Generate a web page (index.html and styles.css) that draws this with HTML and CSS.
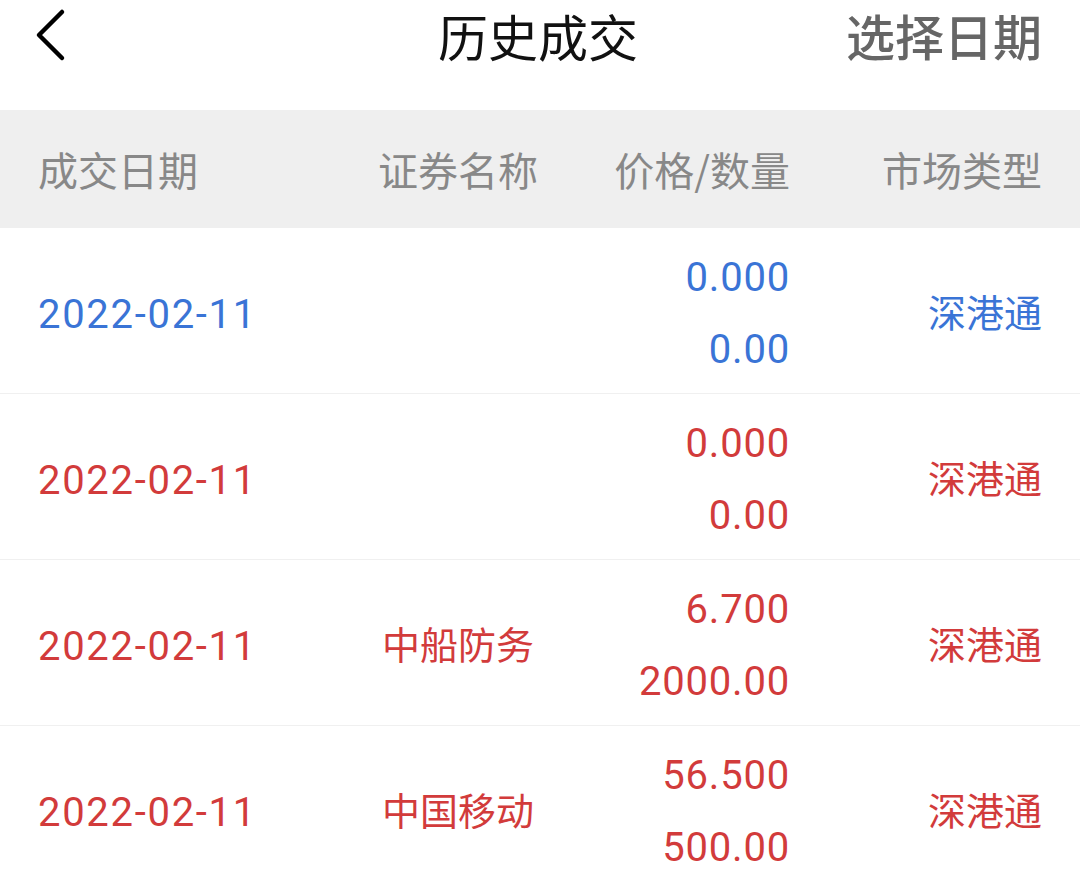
FILE: index.html
```html
<!DOCTYPE html>
<html lang="zh-CN">
<head>
    <meta charset="UTF-8">
    <meta name="viewport" content="width=device-width, initial-scale=1.0">
    <title>历史成交</title>
    <link rel="stylesheet" href="styles.css">
</head>
<body>
    <div class="topbar">
        <span class="back">
            <svg width="34" height="54" viewBox="0 0 34 54">
                <path d="M28 4 L5 27 L28 50" fill="none" stroke="#000" stroke-width="4.5" stroke-linecap="round" stroke-linejoin="round"/>
            </svg>
        </span>
        <span class="title">历史成交</span>
        <span class="pick-date">选择日期</span>
    </div>

    <div class="table-head grid">
        <span class="c1">成交日期</span>
        <span class="c2">证券名称</span>
        <span class="c3">价格/数量</span>
        <span class="c4">市场类型</span>
    </div>

    <!-- trade rows: blue = sell, red = buy -->
    <div class="row grid sell">
        <span class="c1 date">2022-02-11</span>
        <span class="c2"></span>
        <span class="c3 num">0.000<br>0.00</span>
        <span class="c4">深港通</span>
    </div>
    <div class="row grid buy">
        <span class="c1 date">2022-02-11</span>
        <span class="c2"></span>
        <span class="c3 num">0.000<br>0.00</span>
        <span class="c4">深港通</span>
    </div>
    <div class="row grid buy">
        <span class="c1 date">2022-02-11</span>
        <span class="c2">中船防务</span>
        <span class="c3 num">6.700<br>2000.00</span>
        <span class="c4">深港通</span>
    </div>
    <div class="row grid buy">
        <span class="c1 date">2022-02-11</span>
        <span class="c2">中国移动</span>
        <span class="c3 num">56.500<br>500.00</span>
        <span class="c4">深港通</span>
    </div>
</body>
</html>
```

FILE: styles.css
```css
body {
    margin: 0;
    font-family: Roboto, "Noto Sans CJK SC", sans-serif;
    background-color: #fff;
    height: 876px;
    overflow: hidden;
}
.topbar {
    height: 110px;
    display: flex;
    align-items: flex-start;
    justify-content: space-between;
    padding: 0 38px 0 34px;
}
.back {
    width: 200px;
    height: 70px;
    display: flex;
    align-items: center;
}
.title {
    font-family: "Noto Sans CJK SC", sans-serif;
    font-size: 50px;
    line-height: 70px;
    color: #111;
}
.pick-date {
    width: 200px;
    text-align: right;
    font-family: "Noto Sans CJK SC", sans-serif;
    font-size: 49px;
    font-weight: 500;
    line-height: 70px;
    color: #666;
}
.grid {
    display: grid;
    grid-template-columns: 270px 300px 182px 252px;
    align-items: center;
    padding: 0 38px;
}
.c2 {
    text-align: center;
}
.c3,
.c4 {
    text-align: right;
}
.table-head {
    height: 118px;
    background-color: #efefef;
    font-family: "Noto Sans CJK SC", sans-serif;
    font-size: 40px;
    color: #888;
    white-space: nowrap;
}
.row {
    height: 165px;
    border-bottom: 1px solid #f0f0f0;
    font-family: "Noto Sans CJK SC", sans-serif;
    font-size: 38px;
}
.row .date,
.row .num {
    font-family: Roboto, sans-serif;
    font-size: 40px;
    padding-top: 7px;
}
.row .date {
    letter-spacing: 1.7px;
}
.row .num {
    line-height: 72px;
    letter-spacing: 0.8px;
}
.sell {
    color: #3a74d6;
}
.buy {
    color: #d23b3b;
}
```
